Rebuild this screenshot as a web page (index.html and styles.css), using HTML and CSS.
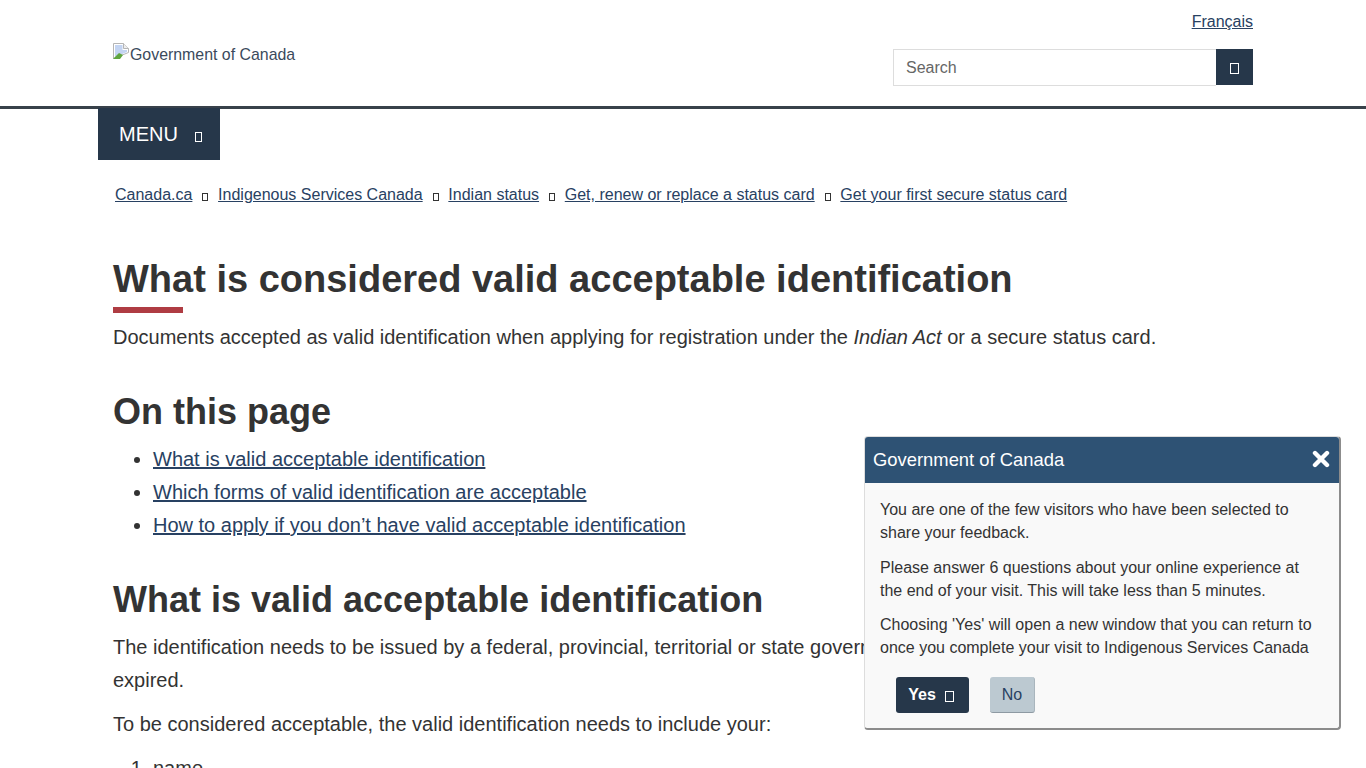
FILE: index.html
```html
<!DOCTYPE html>
<html lang="en">
<head>
    <meta charset="UTF-8">
    <meta name="viewport" content="width=device-width, initial-scale=1.0">
    <title>What is considered valid acceptable identification</title>
    <link rel="stylesheet" href="styles.css">
</head>
<body>
    <header class="site-header">
        <div class="container header-row">
            <a class="brand" href="#">
                <svg class="broken-img" width="16" height="16" viewBox="0 0 16 16">
                    <path d="M.5 .5h10l5 5v4L.5 15.500z" fill="#fff" stroke="#b5b5b5"/>
                    <path d="M10.500 .5v5h5" fill="#eee" stroke="#b5b5b5"/>
                    <path d="M2 2h7.500v5H14v2L2 14z" fill="#c3d4f2"/>
                    <path d="M0 16l6-6 4 2-3 4z" fill="#5fa53f"/>
                </svg>Government of Canada
            </a>
            <div class="header-tools">
                <a class="lang" href="#">Français</a>
                <form class="search">
                    <input type="text" placeholder="Search">
                    <button type="button"><span class="tofu"></span></button>
                </form>
            </div>
        </div>
    </header>

    <nav class="container menu-row">
        <button class="menu-btn">MENU<span class="tofu"></span></button>
    </nav>

    <nav class="container">
        <ol class="breadcrumb">
            <li><a href="#">Canada.ca</a></li>
            <li><span class="tofu"></span><a href="#">Indigenous Services Canada</a></li>
            <li><span class="tofu"></span><a href="#">Indian status</a></li>
            <li><span class="tofu"></span><a href="#">Get, renew or replace a status card</a></li>
            <li><span class="tofu"></span><a href="#">Get your first secure status card</a></li>
        </ol>
    </nav>

    <main class="container content">
        <h1>What is considered valid acceptable identification</h1>
        <p>Documents accepted as valid identification when applying for registration under the <em>Indian Act</em> or a secure status card.</p>

        <h2 class="toc-title">On this page</h2>
        <ul>
            <li><a href="#">What is valid acceptable identification</a></li>
            <li><a href="#">Which forms of valid identification are acceptable</a></li>
            <li><a href="#">How to apply if you don’t have valid acceptable identification</a></li>
        </ul>

        <h2>What is valid acceptable identification</h2>
        <p>The identification needs to be issued by a federal, provincial, territorial or state government agency and it must be valid and not expired.</p>
        <p>To be considered acceptable, the valid identification needs to include your:</p>
        <ol>
            <li>name</li>
        </ol>
    </main>

    <aside class="survey">
        <div class="survey-head">
            <span>Government of Canada</span>
            <svg class="survey-close" width="18" height="18" viewBox="0 0 18 18">
                <path d="M3 3l12 12M15 3L3 15" stroke="#fff" stroke-width="4.400" stroke-linecap="round"/>
            </svg>
        </div>
        <div class="survey-body">
            <p>You are one of the few visitors who have been selected to share your feedback.</p>
            <p>Please answer 6 questions about your online experience at the end of your visit. This will take less than 5 minutes.</p>
            <p>Choosing 'Yes' will open a new window that you can return to once you complete your visit to Indigenous Services Canada</p>
            <div class="survey-actions">
                <button class="btn-yes">Yes<span class="tofu"></span></button>
                <button class="btn-no">No</button>
            </div>
        </div>
    </aside>
</body>
</html>
```

FILE: styles.css
```css
html, body {
    height: 100%;
    overflow: hidden;
}
body {
    margin: 0;
    font-family: "Liberation Sans", Arial, sans-serif;
    font-size: 20px;
    line-height: 33px;
    color: #333;
    background-color: #fff;
}
a {
    color: #284162;
}
.container {
    width: 1140px;
    margin: 0 auto;
}
.tofu {
    display: inline-block;
    box-sizing: border-box;
    width: 7px;
    height: 10px;
    border: 1px solid currentColor;
}

/* header */
.site-header {
    height: 106px;
    border-bottom: 3px solid #38414a;
}
.header-row {
    display: flex;
    justify-content: space-between;
}
.brand {
    display: flex;
    align-items: flex-start;
    margin-top: 43px;
    font-size: 15.9px;
    line-height: 23px;
    color: #3b4a5c;
    text-decoration: none;
}
.broken-img {
    flex: none;
    margin-right: 1px;
}
.header-tools {
    display: flex;
    flex-direction: column;
    align-items: flex-end;
    padding-top: 10px;
}
.lang {
    font-size: 16px;
    line-height: 23px;
}
.search {
    display: flex;
    margin-top: 16px;
}
.search input {
    box-sizing: border-box;
    width: 323px;
    height: 37px;
    padding: 0 12px;
    border: 1px solid #ddd;
    border-right: 0;
    font-family: inherit;
    font-size: 16px;
    color: #555;
}
.search input::placeholder {
    color: #666;
    opacity: 1;
}
.search button {
    width: 37px;
    height: 36px;
    padding: 0;
    border: 0;
    background-color: #26374a;
    color: #fff;
}
.search .tofu {
    width: 9px;
    height: 11px;
    vertical-align: -2px;
}

/* menu + breadcrumb */
.menu-row {
    margin-top: -1px;
    height: 52px;
}
.menu-btn {
    display: block;
    width: 122px;
    height: 52px;
    margin-left: -15px;
    padding: 0 0 0 21px;
    border: 0;
    background-color: #26374a;
    color: #fff;
    font-family: inherit;
    font-size: 20px;
    text-align: left;
}
.menu-btn .tofu {
    margin-left: 17px;
    vertical-align: -1px;
}
.breadcrumb {
    display: flex;
    margin: 23px 0 0;
    padding: 0 0 0 2px;
    list-style: none;
    font-size: 16px;
    line-height: 23px;
}
.breadcrumb .tofu {
    margin: 0 9.7px 0 10px;
    width: 6px;
    height: 8px;
    color: #333;
    vertical-align: -1px;
}

/* main content */
.content {
    padding-top: 52px;
}
h1, h2 {
    margin: 0;
    color: #333;
    font-weight: bold;
}
h1 {
    position: relative;
    font-size: 38px;
    line-height: 43px;
    padding-bottom: 12px;
}
h1::after {
    content: "";
    position: absolute;
    left: 0;
    bottom: 0;
    width: 70px;
    height: 6px;
    background-color: #af3c43;
}
h2 {
    font-size: 36px;
    line-height: 38px;
}
p {
    margin: 0 0 11px;
}
.content h1 + p {
    margin: 8px 0 0;
}
.toc-title {
    margin-top: 39px;
}
ul {
    margin: 12px 0 0;
    padding-left: 40px;
}
.content ul + h2 {
    margin-top: 39px;
}
h2 + p {
    margin-top: 12px;
}
ol {
    margin: 0;
    padding-left: 40px;
}

/* survey popup */
.survey {
    position: fixed;
    left: 864px;
    top: 436px;
    width: 477px;
    height: 294px;
    box-sizing: border-box;
    border-radius: 4px;
    border: 1px solid #ddd;
    border-right: 2px solid #8c8c8c;
    border-bottom: 2px solid #8c8c8c;
    background-color: #f9f9f9;
    font-size: 16px;
    line-height: 23px;
    color: #333;
}
.survey-head {
    display: flex;
    justify-content: space-between;
    align-items: center;
    height: 44px;
    padding: 0 9px 2px 8px;
    background-color: #2e5274;
    border-radius: 3px 3px 0 0;
    color: #fff;
    font-size: 18.4px;
}
.survey-body {
    padding: 15px 27px 0 15px;
}
.survey-body p {
    margin: 0 0 11px;
}
.survey-body p:first-child {
    margin-bottom: 12px;
}
.survey-actions {
    display: flex;
    gap: 21px;
    margin: 18px 0 0 16px;
}
.survey-actions button {
    height: 36px;
    border-radius: 3px;
    font-family: inherit;
    font-size: 16px;
}
.btn-yes {
    width: 73px;
    padding: 0 3px 0 0;
    border: 0;
    background-color: #26374a;
    color: #fff;
    font-weight: bold;
}
.btn-yes span.tofu {
    width: 9px;
    height: 11px;
    margin-left: 9px;
    vertical-align: -2px;
}
.btn-no {
    width: 45px;
    padding: 0;
    border: 0;
    border-bottom: 1px solid #8e9aa3;
    border-right: 1px solid #a9b5bd;
    background-color: #bcc9d1;
    color: #284162;
}
```
